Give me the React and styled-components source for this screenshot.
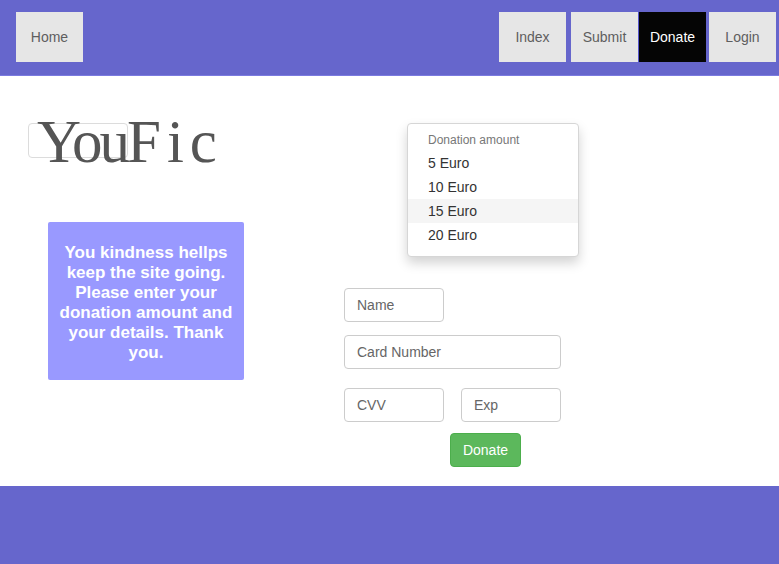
import styled, { createGlobalStyle } from "styled-components"

const Global = createGlobalStyle`
  body {
    margin: 0;
    font-family: "Liberation Sans", Arial, sans-serif;
    background: #fff;
  }
`;

const Nav = styled.nav`
  height: 76px;
  box-sizing: border-box;
  background: #6666cc;
  border-bottom: 1px solid #7b7be0;
  display: flex;
  align-items: flex-start;
  padding: 12px 3px 0 16px;
`;
const NavButton = styled.a`
  width: ${p => (p.$active ? 68 : 67)}px;
  height: 50px;
  display: flex;
  align-items: center;
  justify-content: center;
  margin-left: ${p => p.$gap || 0}px;
  background: ${p => (p.$active ? "#050505" : "#e6e6e6")};
  color: ${p => (p.$active ? "#fff" : "#5e5e5e")};
  font-size: 14px;
  box-sizing: border-box;
  border-left: ${p => (p.$active ? "1px solid #5555cc" : "none")};
`;
const Spacer = styled.div`
  flex: 1;
`;

const Main = styled.main`
  height: 410px;
  display: flex;
`;
const LeftCol = styled.div`
  width: 344px;
  padding: 47px 0 0 28px;
  box-sizing: border-box;
`;
const Logo = styled.div`
  display: grid;
  height: 99px;
`;
const GhostBox = styled.div`
  grid-area: 1 / 1;
  width: 100px;
  height: 35px;
  box-sizing: border-box;
  border: 1px solid #dcdcdc;
  border-radius: 4px;
`;
const LogoText = styled.div`
  grid-area: 1 / 1;
  margin: -16px 0 0 9px;
  font-family: "Liberation Serif", "Times New Roman", serif;
  font-size: 61px;
  line-height: 70px;
  color: #555;
  white-space: nowrap;
  span {
    letter-spacing: -3px;
  }
  span + span {
    letter-spacing: 6px;
  }
`;
const InfoBox = styled.div`
  width: 196px;
  height: 158px;
  margin-left: 20px;
  box-sizing: border-box;
  padding: 21px 6px 0;
  background: #9999ff;
  border-radius: 2px;
  color: #fff;
  font-weight: bold;
  font-size: 17px;
  line-height: 20px;
  text-align: center;
`;

const MidCol = styled.div`
  display: flex;
  flex-direction: column;
  padding-top: 47px;
`;
const Dropdown = styled.ul`
  list-style: none;
  margin: 0 0 31px 63px;
  padding: 5px 0 9px;
  width: 172px;
  box-sizing: border-box;
  background: #fff;
  border: 1px solid #d6d6d6;
  border-radius: 4px;
  box-shadow: 0 6px 12px rgba(0, 0, 0, 0.175);
`;
const DropHeader = styled.li`
  padding: 2px 20px;
  font-size: 12px;
  line-height: 18px;
  color: #777;
`;
const DropItem = styled.li`
  padding: 3px 20px;
  font-size: 14px;
  line-height: 18px;
  color: #333;
  background: ${p => (p.$hover ? "#f5f5f5" : "transparent")};
`;
const Form = styled.form`
  display: grid;
  grid-template-columns: 100px 100px;
  column-gap: 17px;
  width: 217px;
`;
const Input = styled.input`
  grid-column: ${p => (p.$wide ? "1 / 3" : "auto")};
  height: 34px;
  margin-bottom: ${p => p.$mb || 0}px;
  box-sizing: border-box;
  padding: 6px 12px;
  border: 1px solid #ccc;
  border-radius: 4px;
  font-family: "Liberation Sans", Arial, sans-serif;
  font-size: 14px;
  color: #555;
  &::placeholder {
    color: #666;
  }
`;
const Row = styled.div`
  grid-column: 1 / 3;
  display: flex;
  justify-content: center;
`;
const DonateButton = styled.button`
  margin-left: 66px;
  width: 71px;
  height: 34px;
  background: #5cb85c;
  border: 1px solid #4cae4c;
  border-radius: 4px;
  color: #fff;
  font-family: "Liberation Sans", Arial, sans-serif;
  font-size: 14px;
  padding: 0;
`;

const Footer = styled.footer`
  height: 78px;
  background: #6666cc;
`;

const App = () => {
  return (
    <>
      <Global />
      <Nav>
        <NavButton>Home</NavButton>
        <Spacer />
        <NavButton>Index</NavButton>
        <NavButton $gap={5}>Submit</NavButton>
        <NavButton $active>Donate</NavButton>
        <NavButton $gap={3}>Login</NavButton>
      </Nav>
      <Main>
        <LeftCol>
          <Logo>
            <GhostBox />
            <LogoText><span>You</span><span>Fic</span></LogoText>
          </Logo>
          <InfoBox>
            You kindness hellps keep the site going. Please enter your donation amount and your details. Thank you.
          </InfoBox>
        </LeftCol>
        <MidCol>
          <Dropdown>
            <DropHeader>Donation amount</DropHeader>
            <DropItem>5 Euro</DropItem>
            <DropItem>10 Euro</DropItem>
            <DropItem $hover>15 Euro</DropItem>
            <DropItem>20 Euro</DropItem>
          </Dropdown>
          <Form>
            <Input placeholder="Name" $mb={13} />
            <div />
            <Input placeholder="Card Number" $wide $mb={19} />
            <Input placeholder="CVV" $mb={11} />
            <Input placeholder="Exp" $mb={11} />
            <Row>
              <DonateButton type="button">Donate</DonateButton>
            </Row>
          </Form>
        </MidCol>
      </Main>
      <Footer />
    </>
  )
}

export default App
